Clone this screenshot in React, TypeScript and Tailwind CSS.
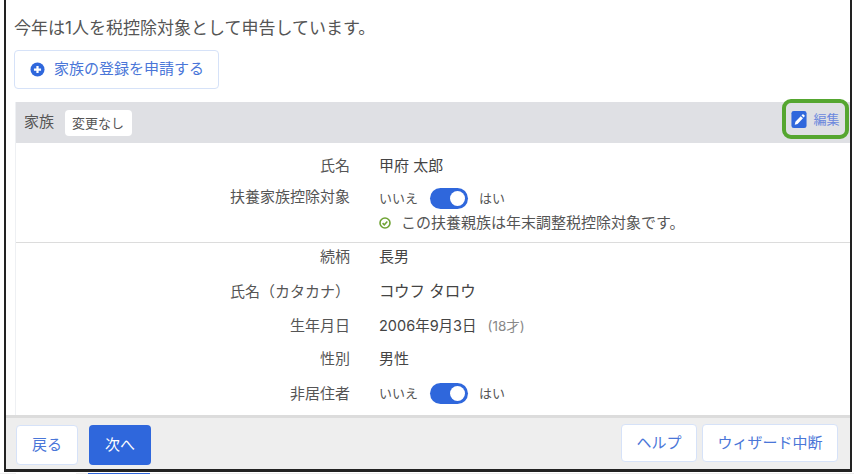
import React from "react";

const FONT = "font-['Inter','Noto_Sans_CJK_JP',sans-serif]";

const Toggle: React.FC = () => (
  <div className="flex h-[22px] items-center text-[13px] text-[#555]">
    <span>いいえ</span>
    <span className="ml-[12px] mr-[11px] flex h-[21px] w-[38px] items-center justify-end rounded-full bg-[#2f67dc] pr-[3px]">
      <span className="h-[15px] w-[15px] rounded-full bg-white" />
    </span>
    <span>はい</span>
  </div>
);

const Row: React.FC<{
  label: string;
  className?: string;
  children: React.ReactNode;
}> = ({ label, className = "", children }) => (
  <div className={`flex ${className}`}>
    <div className="w-[334px] shrink-0 text-right text-[15px] leading-[22px] text-[#555]">
      {label}
    </div>
    <div className="ml-[29px] text-[15px] leading-[22px] text-[#444]">
      {children}
    </div>
  </div>
);

export default function App() {
  return (
    <div className={`${FONT} h-[474px] w-[854px] overflow-hidden bg-white`}>
      <div className="ml-[4px] flex h-[472px] w-[848px] flex-col border-x-2 border-b-[3px] border-[#222]">
        <div className="flex min-h-0 flex-1 flex-col pl-[8px]">
          <div className="pt-[17px] text-[17px] leading-[22px] text-[#555]">
            今年は1人を税控除対象として申告しています。
          </div>
          <button className="mt-[11px] flex h-[39px] w-[205px] items-center rounded-[4px] border border-[#d6e2f8] pl-[15px] text-[15px] text-[#4a76d8]">
            <svg width="15" height="15" viewBox="0 0 16 16" className="mr-[9px]">
              <circle cx="8" cy="8" r="7.5" fill="#2f67dc" />
              <path d="M8 4.2v7.6M4.2 8h7.6" stroke="#fff" strokeWidth="2.4" />
            </svg>
            家族の登録を申請する
          </button>
          <div className="ml-[1px] mt-[13px] flex-1 border-l border-[#eef0f3]">
            <div className="flex h-[41px] items-center justify-between bg-[#dfe0e4] pl-[8px] pr-[1px]">
              <div className="flex items-center text-[15px] text-[#555]">
                <span>家族</span>
                <span className="ml-[11px] rounded-[4px] bg-white pl-[7px] pr-[8px] py-[3px] text-[13px] leading-[20px]">
                  変更なし
                </span>
              </div>
              <div className="mb-[7px] flex h-[40px] w-[67px] items-center justify-center gap-[6px] rounded-[9px] border-[4px] border-[#55a630] pt-[1px] text-[13px] text-[#6b88dd]">
                <svg width="16" height="17" viewBox="0 0 16 18">
                  <rect width="16" height="18" rx="2.5" fill="#2f67dc" />
                  <path d="M3.5 14.5l.7-3 5.6-6 2.4 2.3-5.7 6z" fill="#fff" />
                  <path d="M10.6 4.6l.9-1a1 1 0 011.3 0l1 1a1 1 0 010 1.3l-.9 1z" fill="#fff" />
                </svg>
                編集
              </div>
            </div>
            <Row label="氏名" className="pt-[12px]">甲府 太郎</Row>
            <Row label="扶養家族控除対象" className="mt-[9px]">
              <div className="pt-[1px]">
                <Toggle />
              </div>
              <div className="mt-[4px] flex items-center text-[15px] leading-[20px] text-[#555]">
                <svg width="12" height="12" viewBox="0 0 12 12" className="mr-[10px]">
                  <circle cx="6" cy="6" r="5" fill="none" stroke="#6fa334" strokeWidth="1.6" />
                  <path d="M3.6 6.1l1.7 1.7 3-3.2" fill="none" stroke="#6fa334" strokeWidth="1.5" />
                </svg>
                この扶養親族は年末調整税控除対象です。
              </div>
            </Row>
            <div className="mt-[9px] h-px bg-[#dcdcdc]" />
            <Row label="続柄" className="mt-[3px]">長男</Row>
            <Row label="氏名（カタカナ）" className="mt-[13px]">
              <span className="text-[15.5px]">コウフ タロウ</span>
            </Row>
            <Row label="生年月日" className="mt-[12px]">
              <span className="text-[14.5px]">2006年9月3日</span>
              <span className="ml-[11px] text-[13.5px] text-[#888]">(18才)</span>
            </Row>
            <Row label="性別" className="mt-[11px]">男性</Row>
            <Row label="非居住者" className="mt-[13px]">
              <div className="-mt-[1px]">
                <Toggle />
              </div>
            </Row>
          </div>
        </div>
        <div className="flex h-[54px] items-start justify-between border-t-[3px] border-[#dcdcdc] bg-[#eeeeee] pl-[10px] pr-[12px] pt-[7px]">
          <div className="flex gap-[11px]">
            <button className="h-[40px] w-[62px] rounded-[4px] border border-[#d6e2f8] bg-white text-[15px] text-[#4a76d8]">戻る</button>
            <button className="h-[40px] w-[62px] rounded-[4px] bg-[#2f67dc] text-[15px] text-white">次へ</button>
          </div>
          <div className="-mt-[1px] flex gap-[5px]">
            <button className="h-[38px] w-[76px] rounded-[4px] border border-[#d6e2f8] bg-white text-[15px] text-[#4a76d8]">ヘルプ</button>
            <button className="h-[38px] w-[136px] rounded-[4px] border border-[#d6e2f8] bg-white text-[15px] text-[#4a76d8]">ウィザード中断</button>
          </div>
        </div>
      </div>
      <div className="mt-px flex h-px bg-[#eeeeee] pl-[16px]">
        <div className="w-[60px] bg-white" />
        <div className="ml-[12px] w-[62px] bg-[#2f67dc]" />
      </div>
    </div>
  );
}
